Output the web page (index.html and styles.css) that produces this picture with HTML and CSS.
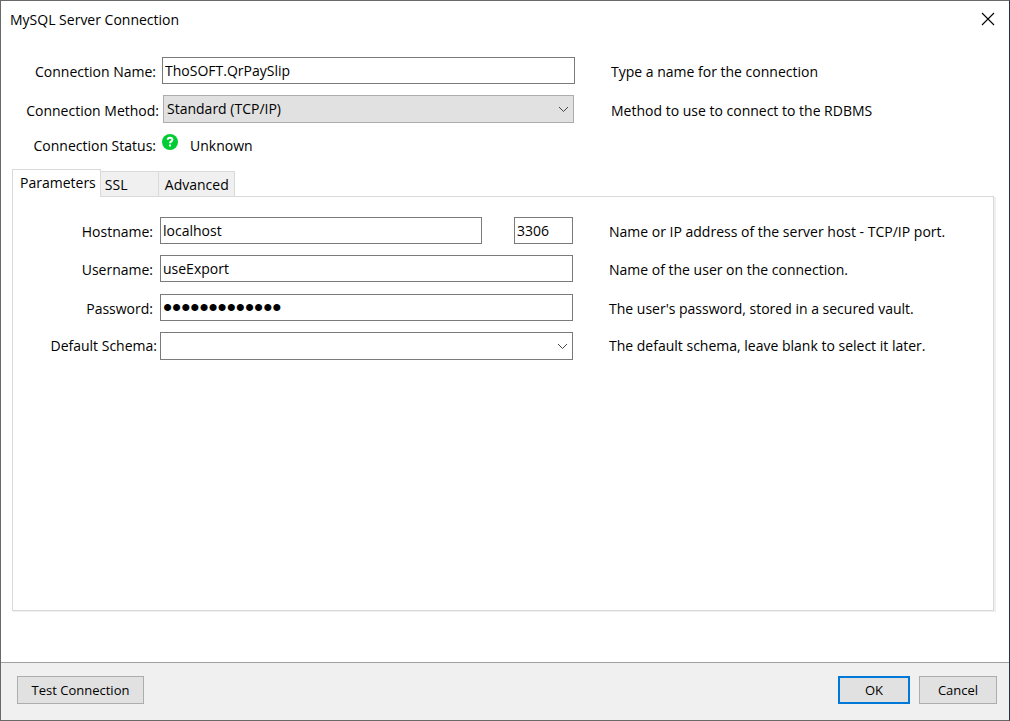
FILE: index.html
```html
<!DOCTYPE html>
<html lang="en">
<head>
<meta charset="utf-8">
<title>MySQL Server Connection</title>
<link rel="stylesheet" href="styles.css">
</head>
<body>
<main class="dialog">
  <header class="titlebar">
    <h1 class="title">MySQL Server Connection</h1>
    <button class="close" type="button" aria-label="Close">
      <svg width="14" height="14" viewBox="0 0 14 14" fill="none" stroke="#000" stroke-width="1.1"><path d="M1 1l12 12M13 1L1 13"/></svg>
    </button>
  </header>

  <section class="form form-connection">
    <label class="label label-name" for="name">Connection Name:</label>
    <input class="field" id="name" type="text" value="ThoSOFT.QrPaySlip">
    <p class="hint">Type a name for the connection</p>

    <label class="label" for="method">Connection Method:</label>
    <div class="combo combo-method">
      <select class="select select-filled" id="method"><option>Standard (TCP/IP)</option></select>
      <svg class="chevron" width="11" height="7" viewBox="0 0 11 7" fill="none" stroke="#444"><path d="M1 1l4.500 4.500L10 1"/></svg>
    </div>
    <p class="hint">Method to use to connect to the RDBMS</p>

    <span class="label label-name">Connection Status:</span>
    <div class="status">
      <svg class="status-icon" width="16" height="16" viewBox="0 0 16 16"><circle cx="8" cy="8" r="8" fill="#00cc33"/><path d="M5.700 5.800C5.800 4.200 6.800 3.700 8 3.700c1.400 0 2.400.8 2.400 2C10.400 7.500 8 7.300 8 9.300" fill="none" stroke="#fff" stroke-width="2"/><rect x="7" y="10.500" width="2" height="2" fill="#fff"/></svg>
      <span>Unknown</span>
    </div>
  </section>

  <section class="tabs">
    <div class="tablist" role="tablist">
      <button class="tab tab-active" type="button" role="tab" aria-selected="true">Parameters</button>
      <button class="tab tab-ssl" type="button" role="tab" aria-selected="false">SSL</button>
      <button class="tab" type="button" role="tab" aria-selected="false">Advanced</button>
    </div>
    <div class="panel" role="tabpanel">
      <div class="form form-parameters">
        <label class="label label-inset" for="host">Hostname:</label>
        <div class="host">
          <input class="field" id="host" type="text" value="localhost">
          <input class="field" id="port" type="text" value="3306" aria-label="Port">
        </div>
        <p class="hint">Name or IP address of the server host - TCP/IP port.</p>

        <label class="label label-inset" for="user">Username:</label>
        <input class="field" id="user" type="text" value="useExport">
        <p class="hint">Name of the user on the connection.</p>

        <label class="label label-inset" for="password">Password:</label>
        <input class="field password" id="password" type="password" value="abcdefghijklm">
        <p class="hint">The user's password, stored in a secured vault.</p>

        <label class="label label-centered" for="schema">Default Schema:</label>
        <div class="combo">
          <select class="select" id="schema"><option></option></select>
          <svg class="chevron" width="11" height="7" viewBox="0 0 11 7" fill="none" stroke="#444"><path d="M1 1l4.500 4.500L10 1"/></svg>
        </div>
        <p class="hint hint-centered">The default schema, leave blank to select it later.</p>
      </div>
    </div>
  </section>

  <footer class="footer">
    <button class="button button-test" type="button">Test Connection</button>
    <div class="actions">
      <button class="button button-default" type="submit">OK</button>
      <button class="button button-cancel" type="button">Cancel</button>
    </div>
  </footer>
</main>
</body>
</html>
```
FILE: styles.css
```css
* {
  box-sizing: border-box;
}

body {
  margin: 0;
  color: #000;
  font: 14px/20px "Open Sans", "Noto Sans", sans-serif;
}

button,
input,
select {
  margin: 0;
  color: inherit;
  font: inherit;
}

.dialog {
  display: flex;
  flex-direction: column;
  min-height: 100vh;
  border: 1px solid #6a6869;
  border-right-color: #203646;
  background: #fff;
}

.titlebar {
  display: flex;
  align-items: center;
  justify-content: space-between;
  height: 38px;
  padding: 0 10px 0 9px;
}

.title {
  margin: 0;
  font-size: 14px;
  font-weight: 400;
}

.close {
  display: flex;
  align-items: center;
  justify-content: center;
  width: 22px;
  height: 24px;
  padding: 0 0 2px;
  border: 0;
  background: none;
}

.form {
  display: grid;
  column-gap: 3px;
  row-gap: 11px;
  align-items: end;
}

.form-connection {
  grid-template-columns: 158px minmax(200px, 413px) 1fr;
  grid-template-rows: 27px 28px 24px;
  padding-top: 18px;
}

.form-parameters {
  grid-template-columns: 144px minmax(200px, 413px) 1fr;
  grid-template-rows: 27px 27px 28px 28px;
}

.label {
  padding-bottom: 2px;
  text-align: right;
  white-space: nowrap;
}

.label-name {
  padding-right: 3px;
}

.label-inset {
  padding-right: 4px;
}

.hint {
  margin: 0;
  padding: 0 0 2px 33px;
}

.label-centered,
.hint-centered {
  padding-bottom: 4px;
}

.field {
  width: 100%;
  min-width: 0;
  height: 27px;
  padding: 0 2px;
  border: 1px solid #7a7a7a;
  border-radius: 0;
  background: #fff;
}

.password {
  font-family: "Liberation Sans", Arial, sans-serif;
  font-size: 26px;
}

.host {
  display: grid;
  grid-template-columns: 1fr 59px;
  column-gap: 32px;
}

.combo {
  display: grid;
  align-items: center;
}

.combo-method {
  padding: 0 1px;
}

.select {
  grid-area: 1 / 1;
  width: 100%;
  height: 28px;
  padding: 0 3px;
  border: 1px solid #7a7a7a;
  border-radius: 0;
  background: #fff;
  appearance: none;
}

.select-filled {
  border-color: #adadad;
  background: #e1e1e1;
}

.chevron {
  grid-area: 1 / 1;
  justify-self: end;
  margin-right: 5px;
  pointer-events: none;
}

.status {
  display: flex;
  gap: 12px;
  align-items: flex-start;
  height: 24px;
}

.status span {
  padding-top: 2px;
}

.tabs {
  display: flex;
  flex: 1;
  flex-direction: column;
  margin: 11px 15px 51px 11px;
}

.tablist {
  display: flex;
  align-items: flex-end;
}

.tab {
  height: 25px;
  padding: 1px 5px 0 6px;
  border: 1px solid #d9d9d9;
  border-bottom: 0;
  border-left: 0;
  background: #f0f0f0;
  text-align: left;
}

.tab-active {
  z-index: 1;
  height: 28px;
  margin-bottom: -1px;
  padding: 0 4px 2px 7px;
  border-left: 1px solid #d9d9d9;
  background: #fff;
}

.tab-ssl {
  width: 58px;
  padding: 1px 4px 0;
}

.panel {
  flex: 1;
  padding-top: 20px;
  border: 1px solid #d9d9d9;
  box-shadow: 1px 1px 0 #f0f0f0, 2px 1px 0 #f0f0f0;
}

.footer {
  display: flex;
  align-items: flex-start;
  justify-content: space-between;
  padding: 13px 12px 16px 16px;
  border-top: 1px solid #a0a0a0;
  background: #f0f0f0;
}

.actions {
  display: flex;
  gap: 9px;
}

.button {
  height: 28px;
  padding: 0;
  border: 1px solid #adadad;
  border-radius: 0;
  background: #e1e1e1;
  font-size: 13px;
}

.button-test {
  width: 127px;
}

.button-default {
  width: 72px;
  border: 2px solid #0078d7;
}

.button-cancel {
  width: 78px;
}
```
